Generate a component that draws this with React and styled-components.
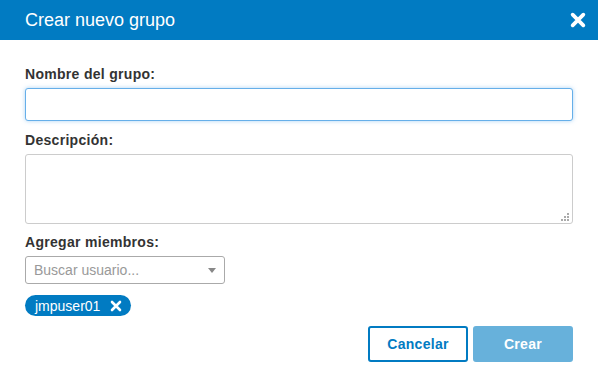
import React from "react";
import styled, { createGlobalStyle } from "styled-components";

const GlobalStyle = createGlobalStyle`
  html, body {
    margin: 0;
    padding: 0;
    background: #ffffff;
    font-family: "Liberation Sans", Arial, sans-serif;
  }
  * { box-sizing: border-box; }
`;

const Modal = styled.div`
  width: 598px;
  height: 388px;
  background: #fff;
  display: flex;
  flex-direction: column;
`;

const Header = styled.div`
  height: 40px;
  background: #017bc2;
  display: flex;
  align-items: center;
  justify-content: space-between;
  padding: 0 12px 0 25px;
  color: #fff;
`;

const Title = styled.h2`
  margin: 0;
  font-size: 18px;
  font-weight: normal;
  line-height: 22px;
`;

const CloseButton = styled.button`
  background: none;
  border: none;
  color: #fff;
  padding: 0;
  display: flex;
  cursor: pointer;
`;

const Body = styled.div`
  padding: 24px 25px 0;
  display: flex;
  flex-direction: column;
`;

const Field = styled.div`
  display: flex;
  flex-direction: column;
  margin-bottom: ${(p) => p.$gap || 9}px;
`;

const Label = styled.label`
  font-size: 14px;
  font-weight: bold;
  letter-spacing: 0.3px;
  line-height: 20px;
  color: #333;
  margin-bottom: 4px;
`;

const TextInput = styled.input`
  height: 33px;
  border: 1px solid #66afe9;
  border-radius: 3px;
  box-shadow: 0 0 4px rgba(102, 175, 233, 0.55);
  outline: none;
  font: 14px "Liberation Sans", Arial, sans-serif;
  padding: 6px 10px;
`;

const AreaWrap = styled.div`
  position: relative;
  height: 70px;
`;

const TextArea = styled.textarea`
  width: 100%;
  height: 70px;
  display: block;
  border: 1px solid #ccc;
  border-radius: 3px;
  resize: none;
  outline: none;
  font: 14px "Liberation Sans", Arial, sans-serif;
  padding: 6px 10px;
`;

const Grip = styled.svg`
  position: absolute;
  right: 4px;
  bottom: 3px;
`;

const Select = styled.div`
  width: 200px;
  height: 28px;
  border: 1px solid #aaa;
  border-radius: 3px;
  display: flex;
  align-items: center;
  justify-content: space-between;
  padding: 0 8px 0 8px;
  font-size: 14px;
  color: #999;
`;

const Caret = styled.span`
  width: 0;
  height: 0;
  border-left: 4px solid transparent;
  border-right: 4px solid transparent;
  border-top: 5px solid #888;
`;

const Chips = styled.div`
  display: flex;
  gap: 6px;
  margin-bottom: 10px;
`;

const Chip = styled.span`
  display: inline-flex;
  align-items: center;
  gap: 10px;
  height: 21px;
  padding: 0 9px 0 10px;
  border-radius: 11px;
  background: #017bc2;
  color: #fff;
  font-size: 14px;
`;

const Actions = styled.div`
  display: flex;
  justify-content: flex-end;
  gap: 5px;
`;

const Button = styled.button`
  width: 100px;
  height: 36px;
  border-radius: 3px;
  font: bold 14px "Liberation Sans", Arial, sans-serif;
  letter-spacing: 0.3px;
  cursor: pointer;
  border: 2px solid ${(p) => (p.$primary ? "#67b1db" : "#017bc2")};
  background: ${(p) => (p.$primary ? "#67b1db" : "#fff")};
  color: ${(p) => (p.$primary ? "#fff" : "#017bc2")};
`;

function XIcon({ size, weight }) {
  return (
    <svg width={size} height={size} viewBox="0 0 12 12">
      <path
        d="M2 2 L10 10 M10 2 L2 10"
        stroke="currentColor"
        strokeWidth={weight}
        strokeLinecap="round"
      />
    </svg>
  );
}

export default function App() {
  const dots = [
    [6, 0],
    [3, 3],
    [6, 3],
    [0, 6],
    [3, 6],
    [6, 6],
  ];
  return (
    <>
      <GlobalStyle />
      <Modal>
        <Header>
          <Title>Crear nuevo grupo</Title>
          <CloseButton aria-label="Cerrar">
            <XIcon size={16} weight={2.8} />
          </CloseButton>
        </Header>
        <Body>
          <Field>
            <Label>Nombre del grupo:</Label>
            <TextInput type="text" />
          </Field>
          <Field $gap={8}>
            <Label>Descripción:</Label>
            <AreaWrap>
              <TextArea />
              <Grip width="8" height="8" viewBox="0 0 8 8">
                {dots.map(([x, y]) => (
                  <rect key={`${x}-${y}`} x={x} y={y} width="2" height="2" fill="#aaa" />
                ))}
              </Grip>
            </AreaWrap>
          </Field>
          <Field $gap={11}>
            <Label>Agregar miembros:</Label>
            <Select>
              <span>Buscar usuario...</span>
              <Caret />
            </Select>
          </Field>
          <Chips>
            <Chip>
              jmpuser01
              <XIcon size={12} weight={2.6} />
            </Chip>
          </Chips>
          <Actions>
            <Button>Cancelar</Button>
            <Button $primary disabled>
              Crear
            </Button>
          </Actions>
        </Body>
      </Modal>
    </>
  );
}
